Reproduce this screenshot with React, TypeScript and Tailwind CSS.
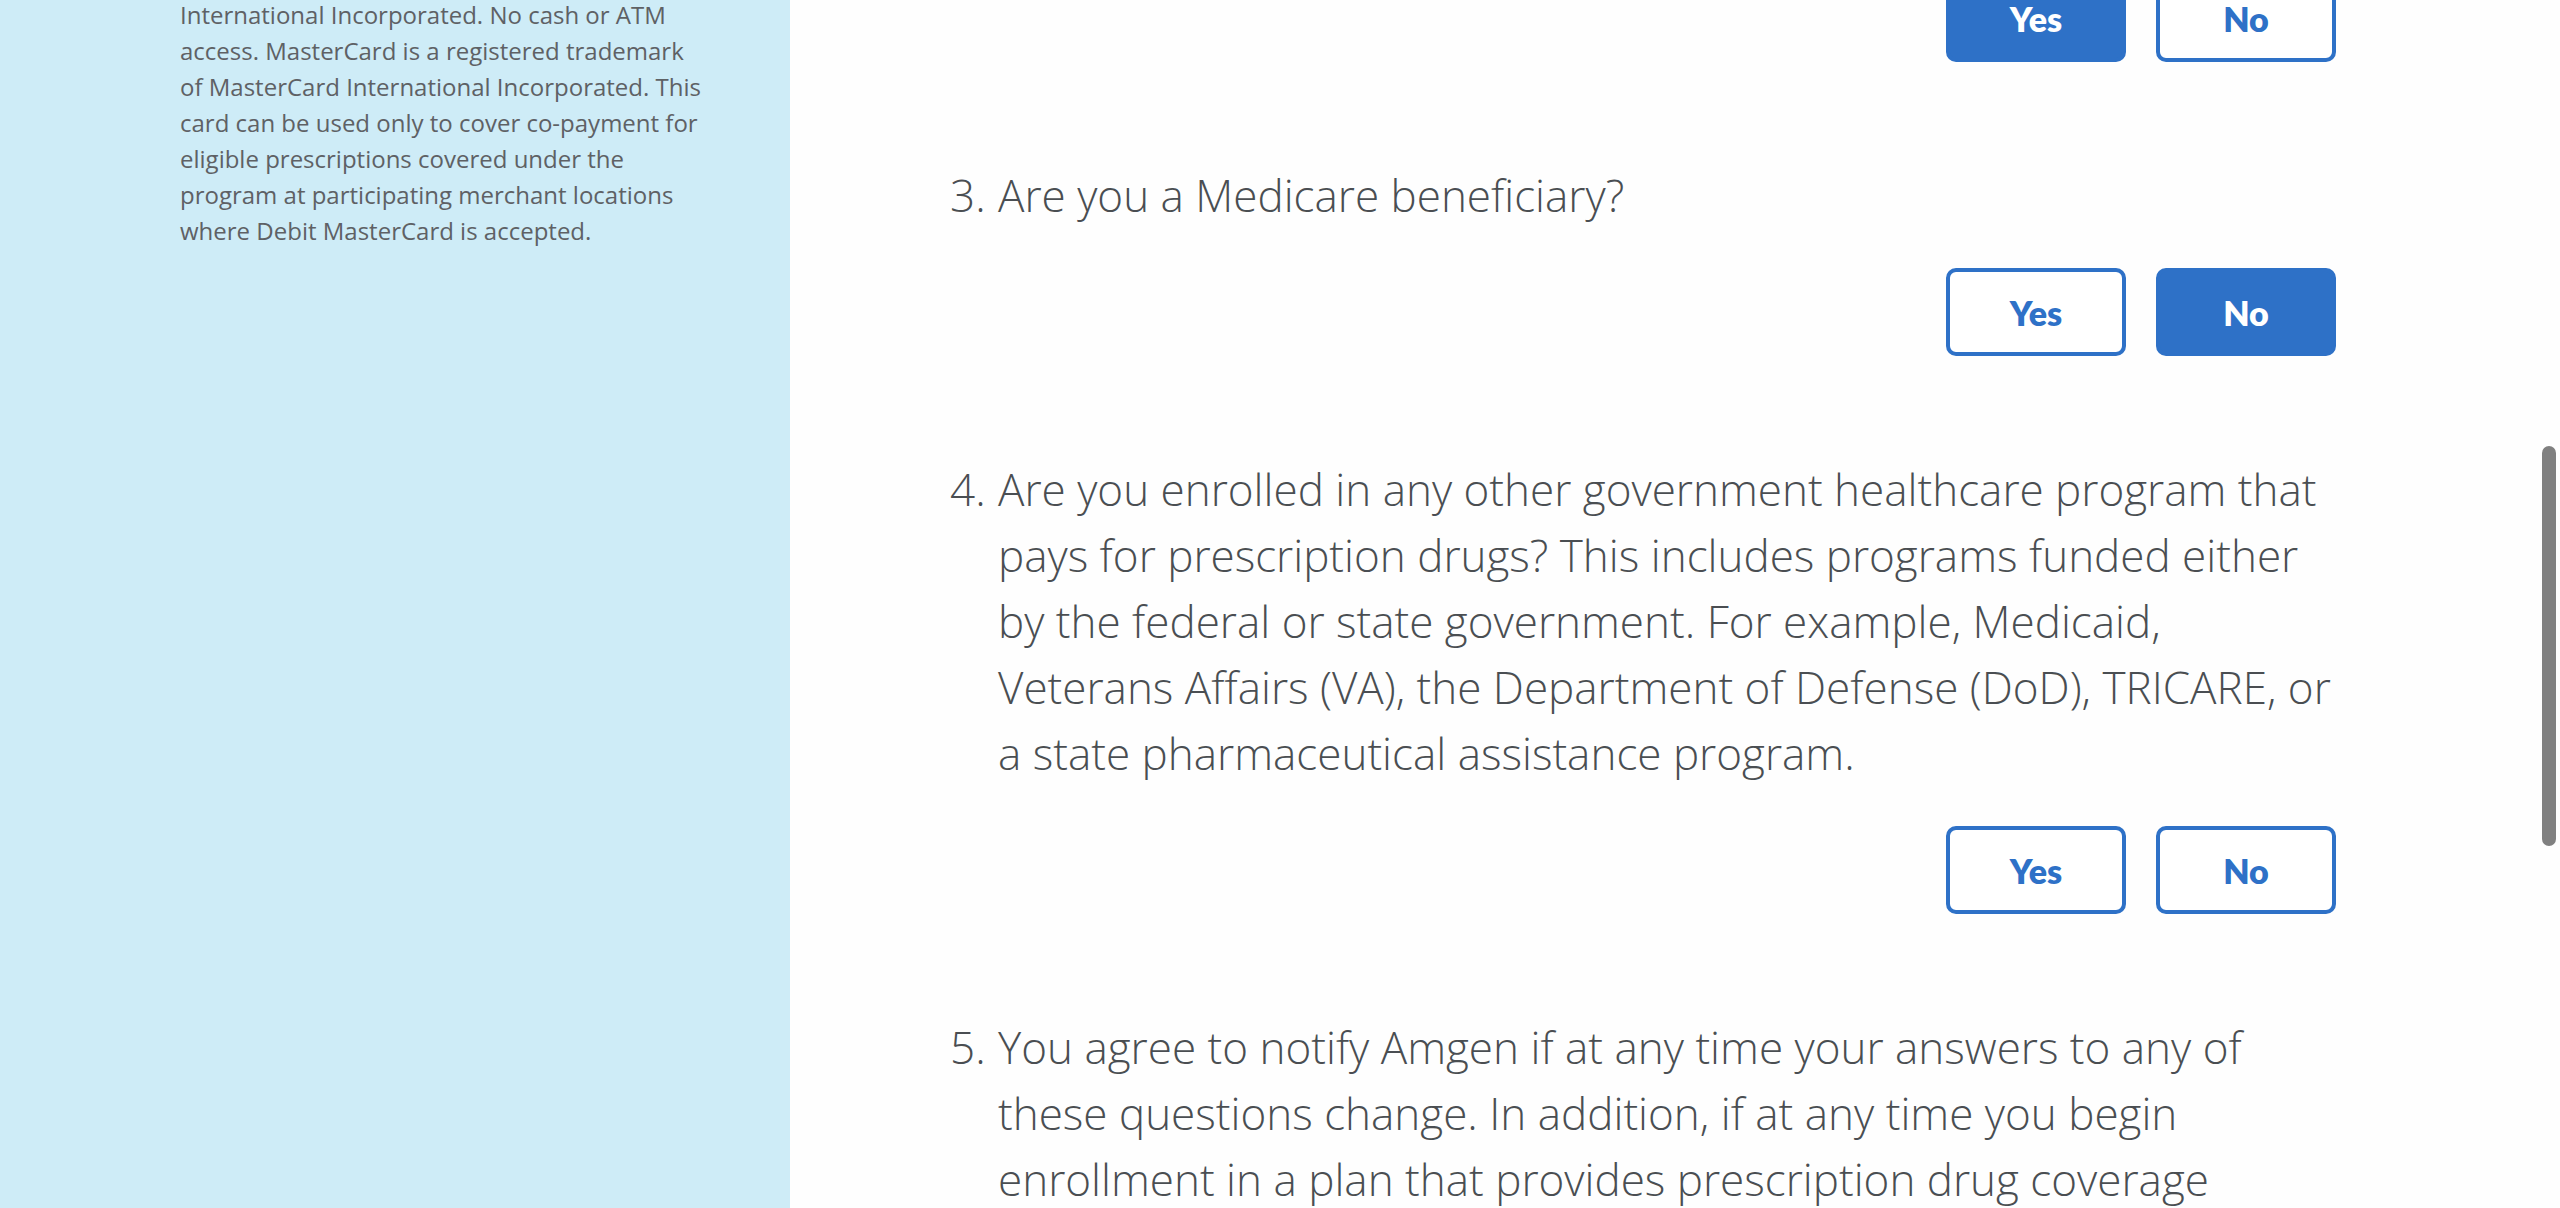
import { useState } from "react";

type Answer = "Yes" | "No";

type Question = {
  number: number;
  text: string;
  answer?: Answer;
};

const questions: Question[] = [
  { number: 3, text: "Are you a Medicare beneficiary?", answer: "No" },
  {
    number: 4,
    text: "Are you enrolled in any other government healthcare program that pays for prescription drugs? This includes programs funded either by the federal or state government. For example, Medicaid, Veterans Affairs (VA), the Department of Defense (DoD), TRICARE, or a state pharmaceutical assistance program.",
  },
];

function AnswerButtons({ initial, labelledBy }: { initial?: Answer; labelledBy?: string }) {
  const [selected, setSelected] = useState<Answer | undefined>(initial);
  const options: Answer[] = ["Yes", "No"];
  return (
    <div role="group" aria-labelledby={labelledBy} className="flex justify-end gap-[30px]">
      {options.map((option) => (
        <button
          key={option}
          type="button"
          aria-pressed={selected === option}
          onClick={() => setSelected(option)}
          className={
            "h-[88px] w-[180px] cursor-pointer rounded-[10px] border-4 border-[#2e71c7] font-['Lato',sans-serif] text-[34px] font-extrabold " +
            (selected === option ? "bg-[#2e71c7] text-white" : "bg-white text-[#2e71c7]")
          }
        >
          {option}
        </button>
      ))}
    </div>
  );
}

function QuestionText({ number, text }: { number: number; text: string }) {
  return (
    <div className="flex text-[44px] leading-[66px] font-light text-[#4a4e52]">
      <span className="w-12 shrink-0">{number}.</span>
      <p id={`question-${number}`} className="flex-1">
        {text}
      </p>
    </div>
  );
}

export default function App() {
  return (
    <div className="relative grid h-screen grid-cols-[79fr_177fr] overflow-hidden bg-[#fefefe] font-['Open_Sans',sans-serif]">
      <aside className="bg-[#ceecf7] pr-20 pl-[180px]">
        <p className="-mt-[3px] text-2xl leading-9 text-[#5e6165]">
          International Incorporated. No cash or ATM access. MasterCard is a registered trademark of
          MasterCard International Incorporated. This card can be used only to cover co-payment for
          eligible prescriptions covered under the program at participating merchant locations where
          Debit MasterCard is accepted.
        </p>
      </aside>

      <main className="-mt-[26px] flex min-w-0 flex-col gap-[100px] pr-[224px] pl-40">
        <AnswerButtons initial="Yes" />
        {questions.map((question) => (
          <section key={question.number} className="flex flex-col gap-10">
            <QuestionText number={question.number} text={question.text} />
            <AnswerButtons
              initial={question.answer}
              labelledBy={`question-${question.number}`}
            />
          </section>
        ))}
        <QuestionText
          number={5}
          text="You agree to notify Amgen if at any time your answers to any of these questions change. In addition, if at any time you begin enrollment in a plan that provides prescription drug coverage"
        />
      </main>

      <div
        aria-hidden="true"
        className="absolute top-[446px] right-1 h-[400px] w-3.5 rounded-full bg-[#808080]"
      />
    </div>
  );
}
